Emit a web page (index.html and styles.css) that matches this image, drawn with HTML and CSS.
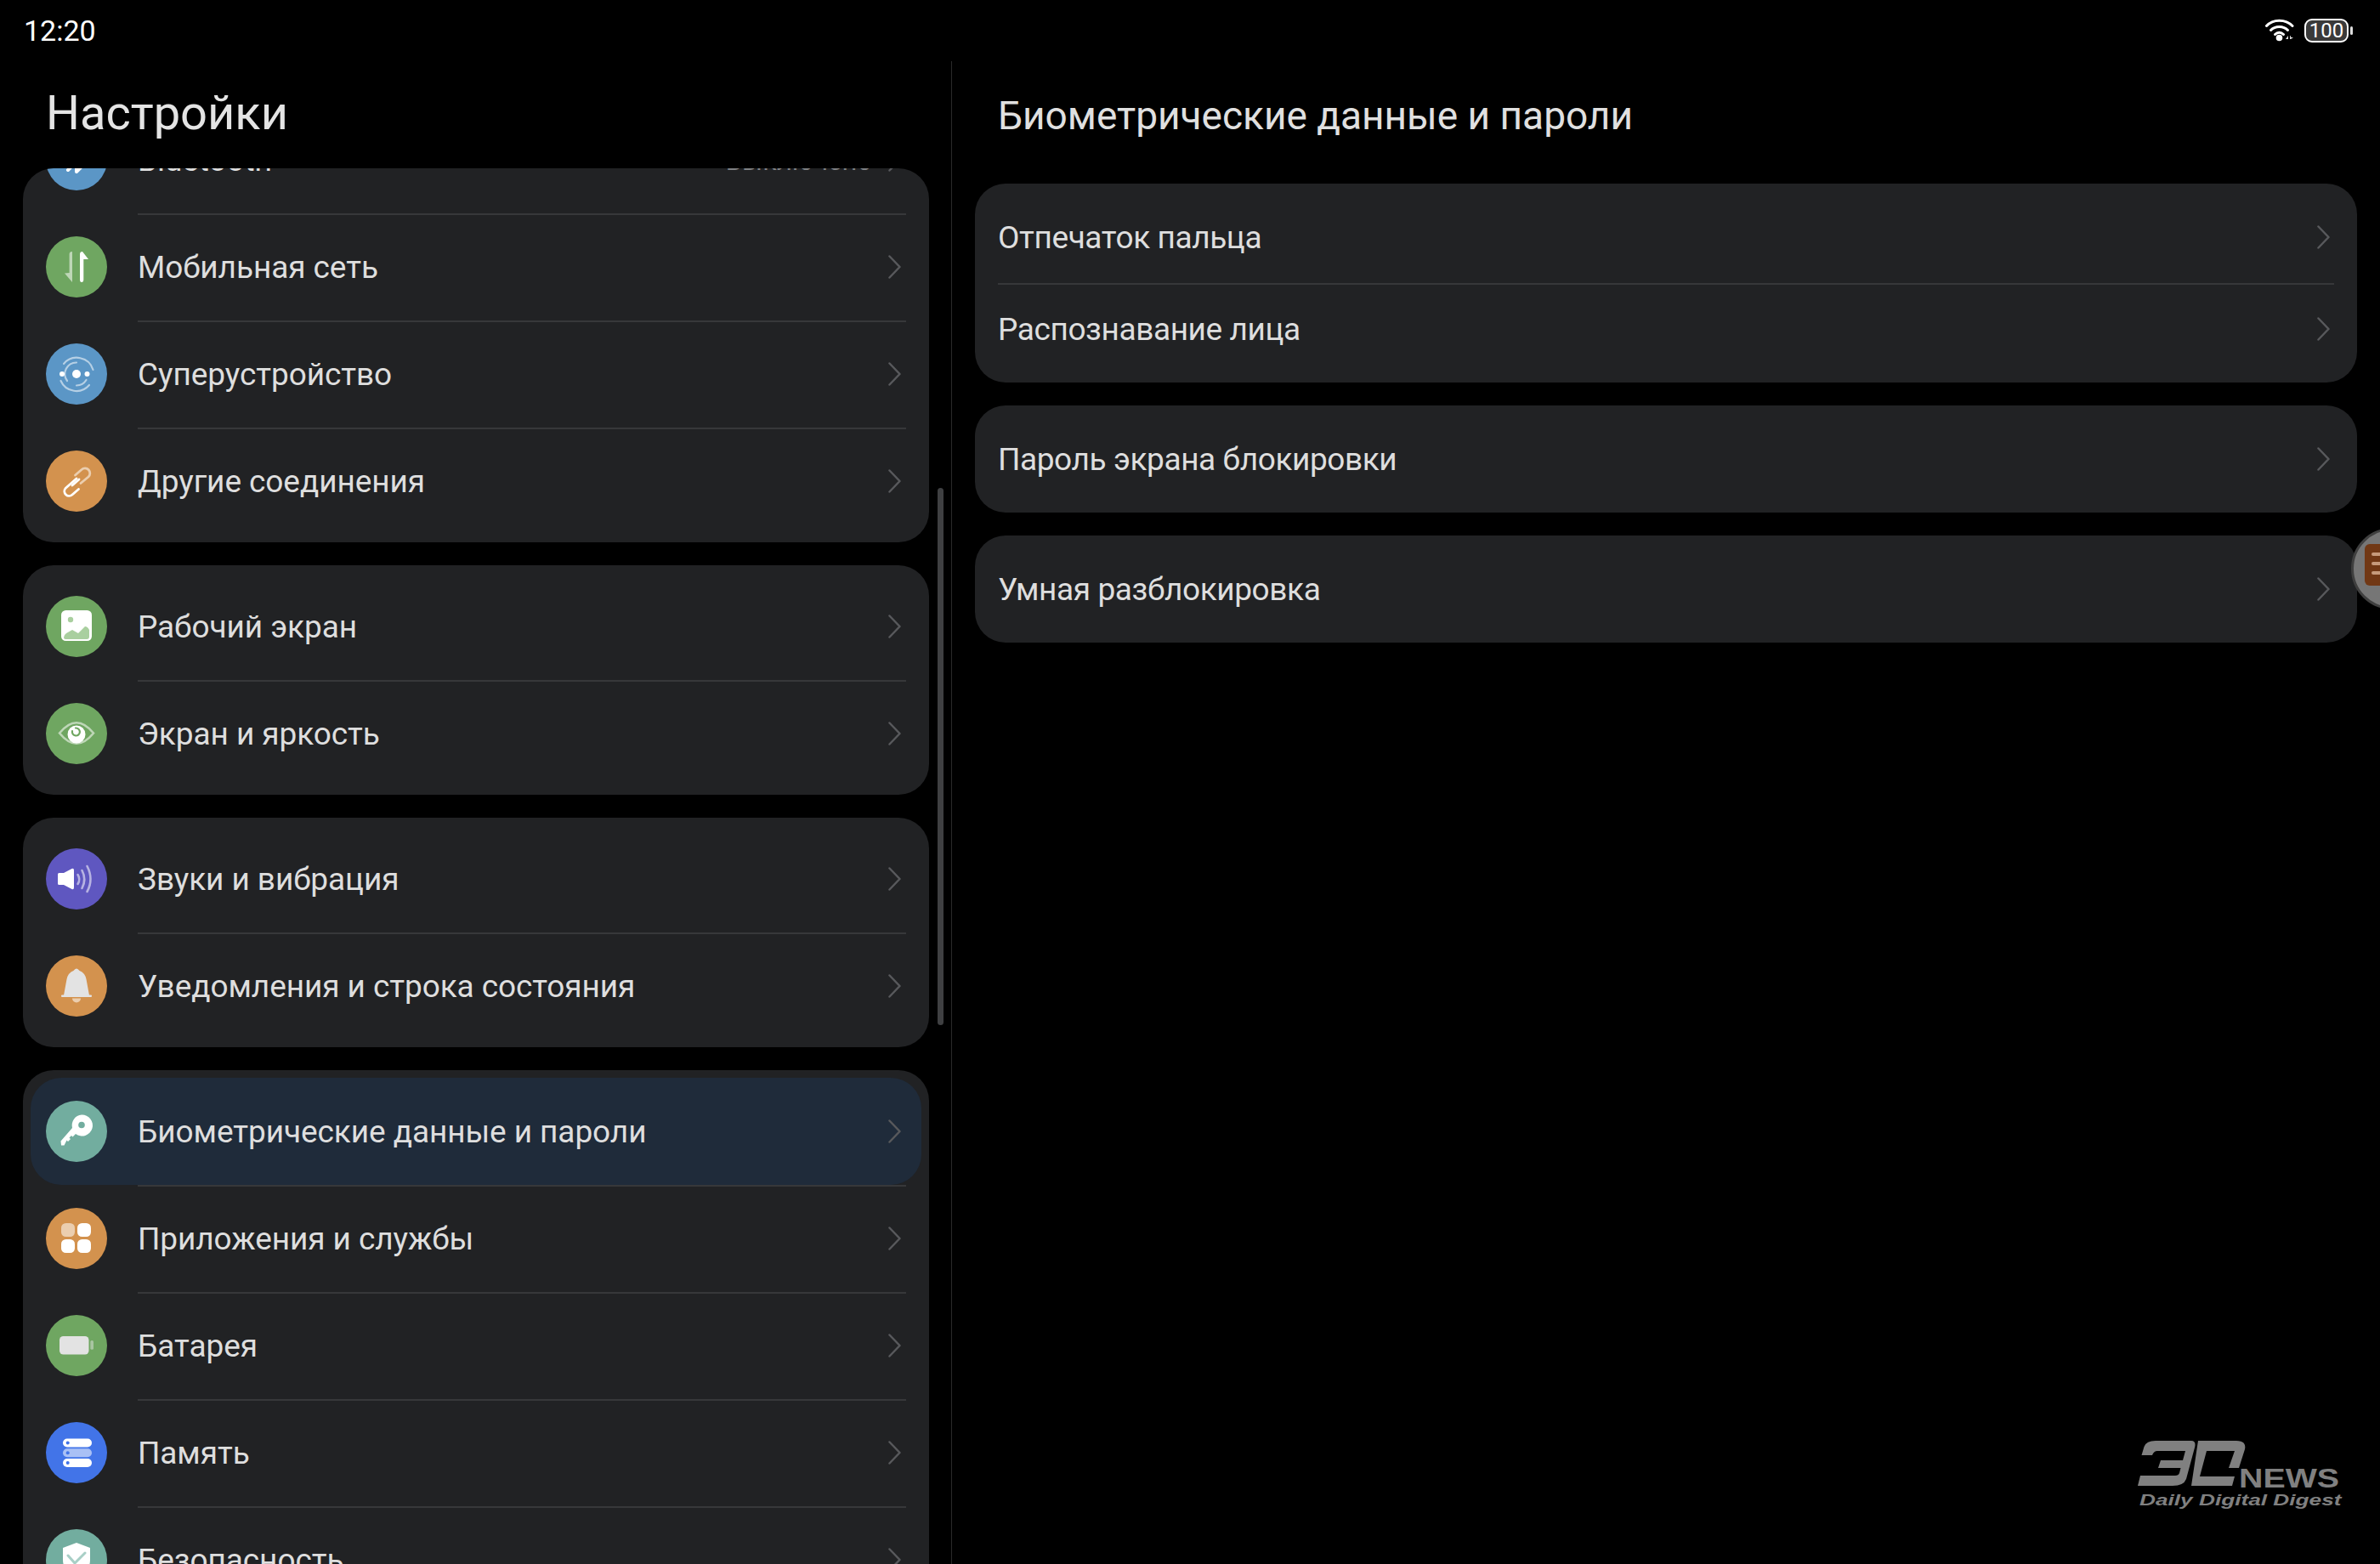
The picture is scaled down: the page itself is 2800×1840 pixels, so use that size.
FILE: index.html
```html
<!DOCTYPE html>
<html lang="ru">
<head>
<meta charset="utf-8">
<title>Настройки</title>
<link rel="stylesheet" href="styles.css">
</head>
<body>
<div class="screen">
  <header class="status">
    <span class="clock">12:20</span>
    <div class="status-icons">
      <svg class="wifi" width="38" height="28" viewBox="0 0 38 28"><g fill="none" stroke="#fff" stroke-width="3" stroke-linecap="round"><path d="M1.5 9.5C9 1 24 1 32 9.500"/><path d="M6.500 14.500C11.500 9 21.500 9 26.500 14.500"/><path d="M11.500 19.500C14.500 16.500 18.500 16.500 21.500 19.500"/></g><circle cx="16.500" cy="23.500" r="3.800" fill="#fff"/><path d="M27 25V21L24 25ZM29 21V25H29.800L33 23.500L29.800 22.500V21Z" fill="#ddd"/></svg>
      <div class="battery"><span>100</span></div>
    </div>
  </header>
  <main class="panes">
    <section class="left">
      <h1 class="left-title">Настройки</h1>
      <div class="list">
        <div class="card card-scrolled">
          <div class="row">
            <svg class="ic c-blue" viewBox="0 0 72 72"><circle cx="36" cy="36" r="36"/><path class="w-line" d="M26 24L44 42L36 50V22L44 30L26 48"/></svg>
            <div class="body"><span class="label">Bluetooth</span><span class="value">Выключено</span><svg class="chev" viewBox="0 0 15 28"><path d="M1.500 1.500L13.500 14L1.500 26.500"/></svg></div>
          </div>
          <div class="row">
            <svg class="ic c-green" viewBox="0 0 72 72"><circle cx="36" cy="36" r="36"/><path class="w soft" d="M31 18Q27.600 18 27.600 21V43L22 43.500L31 54Z"/><path class="w" d="M40 21Q40 18 43 18L50 27L44.300 27V51Q44.300 54 42 54Q40 54 40 51Z"/></svg>
            <div class="body"><span class="label">Мобильная сеть</span><svg class="chev" viewBox="0 0 15 28"><path d="M1.500 1.500L13.500 14L1.500 26.500"/></svg></div>
          </div>
          <div class="row">
            <svg class="ic c-blue" viewBox="0 0 72 72"><circle cx="36" cy="36" r="36"/><g class="w-arc soft"><path d="M21 24A20 20 0 0 1 55.500 31"/><path d="M51 49A20 20 0 0 1 17.500 44"/><path d="M36 22.500A13.500 13.500 0 0 0 25 44"/><path d="M36 49.500A13.500 13.500 0 0 0 47.500 43"/></g><circle class="w" cx="36" cy="36" r="5"/><circle class="w" cx="19" cy="36" r="3"/><circle class="w" cx="48.500" cy="36" r="3"/></svg>
            <div class="body"><span class="label">Суперустройство</span><svg class="chev" viewBox="0 0 15 28"><path d="M1.500 1.500L13.500 14L1.500 26.500"/></svg></div>
          </div>
          <div class="row">
            <svg class="ic c-orange" viewBox="0 0 72 72"><circle cx="36" cy="36" r="36"/><path class="w-line thin" d="M36 33L23 44.500A5.500 5.500 0 0 0 31 52L38.500 45.500"/><path class="w-line thin soft" d="M41 38.500L50 31A5.500 5.500 0 0 0 42 22.500L34.500 29"/><path class="w-line thin" d="M31 41L39 34"/></svg>
            <div class="body"><span class="label">Другие соединения</span><svg class="chev" viewBox="0 0 15 28"><path d="M1.500 1.500L13.500 14L1.500 26.500"/></svg></div>
          </div>
        </div>

        <div class="card">
          <div class="row">
            <svg class="ic c-green" viewBox="0 0 72 72"><circle cx="36" cy="36" r="36"/><rect class="w" x="18" y="17" width="36" height="36" rx="5.500"/><circle class="tint-g" cx="29" cy="28" r="3.200"/><path class="tint-g" d="M21 49Q21 46 24 44L31 40L38 44L46 36Q49 36 51 40V48Q51 51 48 51H23Q21 51 21 49Z"/></svg>
            <div class="body"><span class="label">Рабочий экран</span><svg class="chev" viewBox="0 0 15 28"><path d="M1.500 1.500L13.500 14L1.500 26.500"/></svg></div>
          </div>
          <div class="row">
            <svg class="ic c-green" viewBox="0 0 72 72"><circle cx="36" cy="36" r="36"/><path class="w-arc soft wide" d="M16 35.500Q36 11 56 35.500Q36 60 16 35.500Z"/><circle class="w" cx="36" cy="37" r="10.500"/><path class="g-line" d="M35 29.500A4.500 4.500 0 1 1 31 33"/></svg>
            <div class="body"><span class="label">Экран и яркость</span><svg class="chev" viewBox="0 0 15 28"><path d="M1.500 1.500L13.500 14L1.500 26.500"/></svg></div>
          </div>
        </div>

        <div class="card">
          <div class="row">
            <svg class="ic c-purple" viewBox="0 0 72 72"><circle cx="36" cy="36" r="36"/><path class="w" d="M15.500 29H21L30.500 24Q33 23 33 26V46Q33 49 30.500 48L21 43H15.500Q14 43 14 41.500V30.500Q14 29 15.500 29Z"/><g class="w-arc soft wide"><path d="M37.500 31Q41 36.500 37.500 42"/><path d="M42.500 26Q48 36.500 42.500 47"/><path d="M48.500 21Q56.500 36.500 48.500 51"/></g></svg>
            <div class="body"><span class="label">Звуки и вибрация</span><svg class="chev" viewBox="0 0 15 28"><path d="M1.500 1.500L13.500 14L1.500 26.500"/></svg></div>
          </div>
          <div class="row">
            <svg class="ic c-orange" viewBox="0 0 72 72"><circle cx="36" cy="36" r="36"/><path class="grey" d="M21 47L24.500 28Q26 20.500 32.500 18Q36 13 39.500 18Q46 20.500 47.500 28L51 47Z"/><rect class="grey" x="18" y="46.500" width="36" height="2.400" rx="1"/><path class="w soft" d="M31 50.500H41A5 5 0 0 1 31 50.500Z"/></svg>
            <div class="body"><span class="label">Уведомления и строка состояния</span><svg class="chev" viewBox="0 0 15 28"><path d="M1.500 1.500L13.500 14L1.500 26.500"/></svg></div>
          </div>
        </div>

        <div class="card">
          <div class="row active">
            <svg class="ic c-teal" viewBox="0 0 72 72"><circle cx="36" cy="36" r="36"/><path class="w" d="M42 16.500A12.500 12.500 0 1 1 35 39L31.500 42.500L30 41L27.500 43.500L29 45L26 48L24.500 46.500L21.500 52.500H18L17.500 47.500L31 32A12.500 12.500 0 0 1 42 16.500Z"/><circle class="hole-t" cx="42" cy="28.500" r="3.800"/></svg>
            <div class="body"><span class="label">Биометрические данные и пароли</span><svg class="chev" viewBox="0 0 15 28"><path d="M1.500 1.500L13.500 14L1.500 26.500"/></svg></div>
          </div>
          <div class="row">
            <svg class="ic c-orange" viewBox="0 0 72 72"><circle cx="36" cy="36" r="36"/><rect class="w soft" x="18" y="18" width="16" height="16" rx="5.500"/><rect class="w" x="37" y="18" width="16" height="16" rx="5.500"/><rect class="w" x="18" y="37" width="16" height="16" rx="5.500"/><rect class="w" x="37" y="37" width="16" height="16" rx="5.500"/></svg>
            <div class="body"><span class="label">Приложения и службы</span><svg class="chev" viewBox="0 0 15 28"><path d="M1.500 1.500L13.500 14L1.500 26.500"/></svg></div>
          </div>
          <div class="row">
            <svg class="ic c-green" viewBox="0 0 72 72"><circle cx="36" cy="36" r="36"/><rect class="grey" x="16" y="25" width="34.500" height="21.500" rx="4.500"/><rect class="grey half" x="52.300" y="30" width="3.700" height="10.700" rx="1.500"/></svg>
            <div class="body"><span class="label">Батарея</span><svg class="chev" viewBox="0 0 15 28"><path d="M1.500 1.500L13.500 14L1.500 26.500"/></svg></div>
          </div>
          <div class="row">
            <svg class="ic c-royal" viewBox="0 0 72 72"><circle cx="36" cy="36" r="36"/><rect class="w" x="20" y="19.500" width="34" height="10" rx="5"/><rect class="w soft" x="20" y="31.300" width="34" height="10" rx="5"/><rect class="w" x="20" y="43" width="34" height="10" rx="5"/><circle class="hole-r" cx="25.700" cy="24.500" r="2"/><circle class="hole-r" cx="25.700" cy="36.300" r="2"/><circle class="hole-r" cx="25.700" cy="48" r="2"/></svg>
            <div class="body"><span class="label">Память</span><svg class="chev" viewBox="0 0 15 28"><path d="M1.500 1.500L13.500 14L1.500 26.500"/></svg></div>
          </div>
          <div class="row">
            <svg class="ic c-teal" viewBox="0 0 72 72"><circle cx="36" cy="36" r="36"/><path class="w" d="M36 16L52 22V36Q52 50 36 58Q20 50 20 36V22Z"/><path class="t-line" d="M26 31L34 40L46 28"/></svg>
            <div class="body"><span class="label">Безопасность</span><svg class="chev" viewBox="0 0 15 28"><path d="M1.500 1.500L13.500 14L1.500 26.500"/></svg></div>
          </div>
        </div>
      </div>
      <div class="scrollbar"></div>
    </section>

    <section class="right">
      <h2 class="right-title">Биометрические данные и пароли</h2>
      <div class="right-list">
        <div class="card">
          <div class="row plain"><div class="body"><span class="label">Отпечаток пальца</span><svg class="chev" viewBox="0 0 15 28"><path d="M1.500 1.500L13.500 14L1.500 26.500"/></svg></div></div>
          <div class="row plain"><div class="body"><span class="label">Распознавание лица</span><svg class="chev" viewBox="0 0 15 28"><path d="M1.500 1.500L13.500 14L1.500 26.500"/></svg></div></div>
        </div>
        <div class="card">
          <div class="row plain"><div class="body"><span class="label">Пароль экрана блокировки</span><svg class="chev" viewBox="0 0 15 28"><path d="M1.500 1.500L13.500 14L1.500 26.500"/></svg></div></div>
        </div>
        <div class="card">
          <div class="row plain"><div class="body"><span class="label">Умная разблокировка</span><svg class="chev" viewBox="0 0 15 28"><path d="M1.500 1.500L13.500 14L1.500 26.500"/></svg></div></div>
        </div>
      </div>
    </section>
  </main>

  <div class="bubble"><div class="note"><i></i><i></i><i></i></div></div>

  <div class="brand">
    <svg class="brand-mark" width="140" height="75" viewBox="0 0 140 75"><path d="M9.500 27L12.500 17Q15 10 26 10H68Q74 10 72 18L62 55Q59 63 46 63H5L8 51H49Q53 51 54 48L55.500 42H29L32 33H58L61 22H28Q24 22 22 27Z"/><path d="M76 10H121Q133 10 131 20L124 42H112L119 22H86L78 52H119L116 63H68Z"/></svg>
    <span class="brand-news">NEWS</span>
    <span class="brand-tag">Daily Digital Digest</span>
  </div>
</div>
</body>
</html>
```

FILE: styles.css
```css
* { box-sizing: border-box; }
html, body { margin: 0; padding: 0; background: #000; }
.screen {
  position: relative;
  width: 2800px;
  height: 1840px;
  overflow: hidden;
  background: #000;
  color: #e4e4e4;
  font-family: Roboto, "Noto Sans", sans-serif;
}

/* status bar */
.status {
  height: 72px;
  display: flex;
  align-items: center;
  justify-content: space-between;
  padding: 0 37px 0 28px;
}
.clock { font-size: 34px; color: #fff; }
.status-icons { display: flex; align-items: center; gap: 8px; }
.wifi { display: block; margin-top: -2px; }
.battery {
  position: relative;
  width: 52px;
  height: 28px;
  border: 2px solid #fff;
  border-radius: 9px;
  background: #3a3a3a;
  color: #fff;
  font-size: 24px;
  line-height: 24px;
  text-align: center;
}
.battery::after {
  content: "";
  position: absolute;
  right: -7px;
  top: 7px;
  width: 3px;
  height: 10px;
  border-radius: 2px;
  background: #ddd;
}

/* panes */
.panes { display: flex; height: 1768px; }
.left { position: relative; width: 1120px; border-right: 1px solid #2a2a2a; padding: 0 26px 0 27px; }
.left-title { margin: 0; height: 126px; padding-left: 27px; font-size: 56px; font-weight: 400; line-height: 122px; color: #e4e4e4; }
.list { height: 1642px; overflow: hidden; border-radius: 36px 36px 0 0; display: flex; flex-direction: column; gap: 27px; }
.card { background: #212224; border-radius: 36px; padding: 9px 0; flex: none; }
.card-scrolled { margin-top: -82px; }
.row { display: flex; align-items: center; height: 126px; margin: 0 9px; padding: 0 18px; gap: 36px; border-radius: 36px; }
.row.active { background: #1f2b3a; }
.row.plain { height: 108px; padding: 0 18px; }
.ic { width: 72px; height: 72px; flex: none; display: block; }
.body { flex: 1; align-self: stretch; display: flex; align-items: center; min-width: 0; }
.row + .row .body { box-shadow: inset 0 2px 0 #37383a; }
.label { flex: 1; padding-top: 2px; font-size: 37px; line-height: 48px; letter-spacing: -0.08px; color: #dedede; }
.value { padding-top: 2px; font-size: 31px; color: #808184; margin-right: 19px; }
.chev { width: 15px; height: 28px; flex: none; margin-right: 6px; }
.chev path { fill: none; stroke: #58595c; stroke-width: 2.500; stroke-linecap: round; stroke-linejoin: round; }

/* icon colours */
.c-green > circle:first-child { fill: #6fa661; }
.c-blue > circle:first-child { fill: #5b96c6; }
.c-orange > circle:first-child { fill: #d3924e; }
.c-purple > circle:first-child { fill: #5f57c0; }
.c-teal > circle:first-child { fill: #72ad9f; }
.c-royal > circle:first-child { fill: #4274e8; }
.w { fill: #fff; }
.grey { fill: #e3e3e3; }
.half { opacity: .5; }
.soft { opacity: .55; }
.w-line { fill: none; stroke: #fff; stroke-width: 4; stroke-linecap: round; stroke-linejoin: round; }
.w-line.thin { stroke-width: 2.800; }
.w-arc { fill: none; stroke: #fff; stroke-width: 2.200; stroke-linecap: round; }
.w-arc.wide { stroke-width: 2.600; }
.tint-g { fill: #a9cf9f; }
.g-line { fill: none; stroke: #6fa661; stroke-width: 2.200; stroke-linecap: round; }
.hole-t { fill: #72ad9f; }
.hole-r { fill: #4274e8; }
.t-line { fill: none; stroke: #a8cfc6; stroke-width: 3; stroke-linecap: round; stroke-linejoin: round; }

/* scrollbar */
.scrollbar { position: absolute; left: 1103px; top: 502px; width: 7px; height: 632px; border-radius: 4px; background: #3f4042; }

/* right */
.right { flex: 1; padding: 0 27px; }
.right-title { margin: 0 0 18px; height: 126px; padding-left: 27px; font-size: 46px; font-weight: 400; line-height: 129px; color: #e0e0e0; }
.right-list { display: flex; flex-direction: column; gap: 27px; }
.right .row { margin: 0; padding: 0 27px; }
.right .label { letter-spacing: -0.4px; }
.right .chev { margin-right: 5px; }

/* floating bubble */
.bubble { position: absolute; left: 2766px; top: 621px; width: 96px; height: 96px; border-radius: 50%; background: #767676; border: 3px solid #3f3f3f; }
.note { position: absolute; left: 13px; top: 16px; width: 60px; height: 49px; border-radius: 6px; background: #713815; padding: 10px 0 0 8px; }
.note i { display: block; height: 4px; margin-bottom: 7px; background: #c69a7b; border-radius: 2px; }

/* watermark */
.brand { position: absolute; left: 2510px; top: 1685px; width: 250px; height: 95px; color: #808080; }
.brand-mark { position: absolute; left: 0; top: 0; fill: #808080; }
.brand-news { position: absolute; left: 124px; top: 39px; font-family: "Liberation Sans", sans-serif; font-size: 31px; line-height: 32px; font-weight: 700; transform: scaleX(1.27); transform-origin: 0 0; }
.brand-tag { position: absolute; left: 7px; top: 69px; font-family: "Liberation Sans", sans-serif; font-size: 19px; line-height: 22px; font-weight: 700; font-style: italic; white-space: nowrap; transform: scaleX(1.38); transform-origin: 0 0; }
```
